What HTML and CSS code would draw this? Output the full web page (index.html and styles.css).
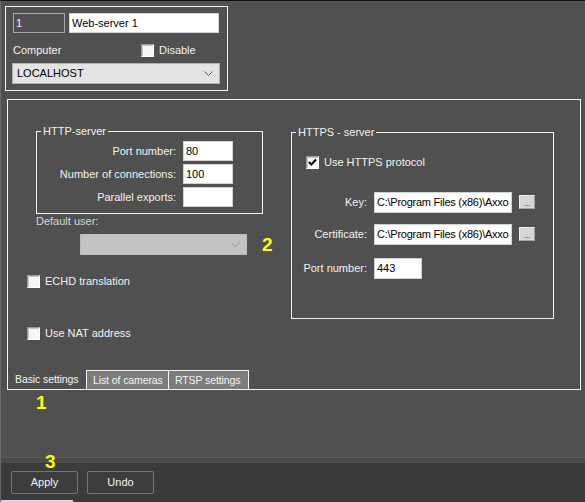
FILE: index.html
```html
<!DOCTYPE html>
<html>
<head>
<meta charset="utf-8">
<link rel="stylesheet" href="styles.css">
</head>
<body>
<div class="app">
  <div class="head">
    <div class="head-row1">
      <div class="id-box">1</div>
      <div class="field name-field">Web-server 1</div>
    </div>
    <div class="head-row2">
      <span class="comp-label">Computer</span>
      <span class="cb"></span>
      <span class="cb-text">Disable</span>
    </div>
    <div class="select host-select">
      <span>LOCALHOST</span>
      <svg class="chev" width="9" height="5" viewBox="0 0 9 5"><polyline points="0.5,0.5 4.5,4.5 8.5,0.5" fill="none" stroke="#5a5a5a" stroke-width="1"/></svg>
    </div>
  </div>

  <div class="main">
    <div class="main-body">
      <div class="left-col">
        <div class="group http-group">
          <span class="legend">HTTP-server</span>
          <div class="form-grid">
            <span class="flabel">Port number:</span><div class="field">80</div>
            <span class="flabel">Number of connections:</span><div class="field">100</div>
            <span class="flabel">Parallel exports:</span><div class="field"></div>
          </div>
        </div>
        <div class="default-user">Default user:</div>
        <div class="user-row">
          <div class="select user-select">
            <svg class="chev" width="9" height="5" viewBox="0 0 9 5"><polyline points="0.5,0.5 4.5,4.5 8.5,0.5" fill="none" stroke="#9c9c9c" stroke-width="1"/></svg>
          </div>
          <span class="mark mark2">2</span>
        </div>
        <div class="check-row echd"><span class="cb"></span><span class="cb-text">ECHD translation</span></div>
        <div class="check-row nat"><span class="cb"></span><span class="cb-text">Use NAT address</span></div>
      </div>

      <div class="group https-group">
        <span class="legend">HTTPS - server</span>
        <div class="check-row https-check">
          <span class="cb checked"><svg width="11" height="11" viewBox="0 0 11 11"><polyline points="2,5 4.3,7.6 9,2.5" fill="none" stroke="#000" stroke-width="2"/></svg></span>
          <span class="cb-text">Use HTTPS protocol</span>
        </div>
        <div class="frow key-row">
          <span class="rlabel">Key:</span>
          <div class="field path">C:\Program Files (x86)\Axxo</div>
          <span class="dots">...</span>
        </div>
        <div class="frow cert-row">
          <span class="rlabel">Certificate:</span>
          <div class="field path">C:\Program Files (x86)\Axxo</div>
          <span class="dots">...</span>
        </div>
        <div class="frow port-row">
          <span class="rlabel">Port number:</span>
          <div class="field port">443</div>
        </div>
      </div>
    </div>
    <div class="tabs">
      <span class="tab tab-active">Basic settings</span>
      <span class="tab tab-cams">List of cameras</span>
      <span class="tab tab-rtsp">RTSP settings</span>
    </div>
  </div>

  <div class="mark-area"><span class="mark mark1">1</span></div>
  <div class="sep-line"></div>
  <div class="bottom-bar">
    <span class="mark mark3">3</span>
    <div class="buttons">
      <span class="btn">Apply</span>
      <span class="btn">Undo</span>
    </div>
    <div class="strip"></div>
  </div>
</div>
</body>
</html>
```

FILE: styles.css
```css
* { box-sizing: border-box; }

html, body {
  margin: 0;
  padding: 0;
}

body {
  width: 585px;
  height: 502px;
  overflow: hidden;
  background: #505050;
  font-family: "Liberation Sans", Arial, sans-serif;
  font-size: 11px;
  line-height: 13px;
  color: #f2f2f2;
}

.app {
  width: 585px;
  height: 502px;
  display: flex;
  flex-direction: column;
  border-top: 1px solid #111;
  border-left: 1px solid #6a6a6a;
}

/* ---------- head panel ---------- */
.head {
  margin: 5px 0 0 4px;
  width: 223px;
  height: 85px;
  flex: none;
  border: 1px solid #f4f4f4;
  padding: 6px 7px 0 7px;
}

.head-row1 {
  display: flex;
  gap: 4px;
  height: 20px;
}

.id-box {
  width: 52px;
  height: 20px;
  border: 1px solid #a8a8a8;
  padding-left: 2px;
  line-height: 18px;
  color: #f4f4f4;
}

.field {
  background: #fff;
  border: 1px solid #d2d2d2;
  color: #000;
  height: 20px;
  line-height: 18px;
  padding-left: 2px;
  white-space: nowrap;
  overflow: hidden;
}

.name-field {
  width: 150px;
}

.head-row2 {
  display: flex;
  align-items: center;
  margin-top: 11px;
  height: 13px;
}

.comp-label {
  width: 128px;
}

.cb {
  width: 13px;
  height: 13px;
  flex: none;
  background: #f6f6f6;
  border: 1px solid;
  border-color: #9a9a9a #ffffff #ffffff #9a9a9a;
  box-shadow: inset 1px 1px 0 #c6c6c6;
  display: flex;
  align-items: center;
  justify-content: center;
}

.cb-text {
  margin-left: 5px;
}

.select {
  display: flex;
  align-items: center;
  justify-content: space-between;
  height: 21px;
  border: 1px solid #b0b0b0;
  background: #e3e3e3;
  color: #000;
  padding: 0 6px 0 4px;
}

.host-select {
  margin: 6px 0 0 -1px;
  width: 208px;
}

.chev { flex: none; display: block; }

/* ---------- main panel ---------- */
.main {
  margin: 8px 0 0 6px;
  width: 574px;
  height: 291px;
  flex: none;
  border: 1px solid #f4f4f4;
  display: flex;
  flex-direction: column;
}

.main-body {
  height: 270px;
  display: flex;
  flex: none;
}

.left-col {
  width: 255px;
  padding-left: 19px;
  flex: none;
}

.group {
  position: relative;
  border: 1px solid #f4f4f4;
}

.legend {
  position: absolute;
  top: -7px;
  left: 4px;
  padding: 0 2px;
  background: #505050;
  line-height: 13px;
}

.http-group {
  margin: 31px 0 0 9px;
  width: 227px;
  height: 83px;
  padding: 9px 29px 6px 0;
}

.form-grid {
  display: grid;
  grid-template-columns: 1fr 50px;
  grid-auto-rows: 20px;
  column-gap: 7px;
  row-gap: 3px;
  align-items: center;
}

.flabel { text-align: right; }

.default-user {
  margin: 1px 0 0 9px;
  color: #d6d6d6;
}

.user-row {
  display: flex;
  align-items: flex-start;
  margin-top: 6px;
  height: 21px;
}

.user-select {
  flex: none;
  margin-left: 53px;
  width: 167px;
  background: #c3c3c3;
  border-color: #bcbcbc;
  justify-content: flex-end;
}

.mark {
  color: #ffff00;
  font-weight: bold;
  font-size: 19px;
  line-height: 21px;
  flex: none;
}

.mark2 { margin-left: 15px; }

.check-row {
  display: flex;
  align-items: center;
  height: 13px;
}

.echd { margin-top: 20px; }
.nat { margin-top: 39px; }

.https-group {
  margin: 32px 0 0 28px;
  width: 263px;
  height: 187px;
  flex: none;
}

.https-check {
  margin: 23px 0 0 14px;
}

.frow {
  display: flex;
  align-items: center;
  gap: 7px;
  height: 21px;
}

.key-row { margin-top: 23px; }
.cert-row { margin-top: 11px; }
.port-row { margin-top: 13px; }

.rlabel {
  width: 75px;
  text-align: right;
  flex: none;
}

.frow .field {
  height: 21px;
  line-height: 19px;
}

.path {
  width: 138px;
  flex: none;
  letter-spacing: -0.25px;
}

.port { width: 48px; flex: none; }

.dots {
  align-self: flex-start;
  flex: none;
  margin-top: 3px;
  width: 16px;
  height: 14px;
  background: #d6d6d6;
  border: 1px solid;
  border-color: #ececec #a4a4a4 #a4a4a4 #ececec;
  color: #555;
  font-size: 9px;
  line-height: 14px;
  text-align: center;
  letter-spacing: -0.5px;
}

/* ---------- tabs ---------- */
.tabs {
  display: flex;
  height: 19px;
  flex: none;
}

.tab {
  height: 19px;
  line-height: 18px;
  color: #f4f4f4;
  white-space: nowrap;
  font-size: 10.5px;
  letter-spacing: -0.1px;
}

.tab-active {
  width: 78px;
  padding-left: 7px;
}

.tab-cams {
  width: 83px;
  border: 1px solid #f4f4f4;
  border-bottom: none;
  background: #7c7c7c;
  padding-left: 6px;
}

.tab-rtsp {
  width: 80px;
  border: 1px solid #f4f4f4;
  border-left: none;
  border-bottom: none;
  background: #7c7c7c;
  padding-left: 6px;
}

/* ---------- bottom ---------- */
.mark-area {
  height: 67px;
  flex: none;
  padding: 2px 0 0 35px;
}

.sep-line {
  height: 6px;
  flex: none;
  border-top: 1px solid #5a5a5a;
  background: #4b4b4b;
}

.bottom-bar {
  position: relative;
  flex: 1;
  background: #3b3b3b;
  display: flex;
  flex-direction: column;
  padding-top: 8px;
}

.mark3 {
  position: absolute;
  top: -12px;
  left: 44px;
}

.buttons {
  display: flex;
  gap: 9px;
  padding-left: 10px;
}

.btn {
  width: 67px;
  height: 23px;
  border: 1px solid #767676;
  border-radius: 2px;
  background: #3d3d3d;
  color: #f2f2f2;
  text-align: center;
  line-height: 21px;
}

.strip {
  margin-top: auto;
  width: 72px;
  height: 2px;
  background: #d9d9e6;
}
```
